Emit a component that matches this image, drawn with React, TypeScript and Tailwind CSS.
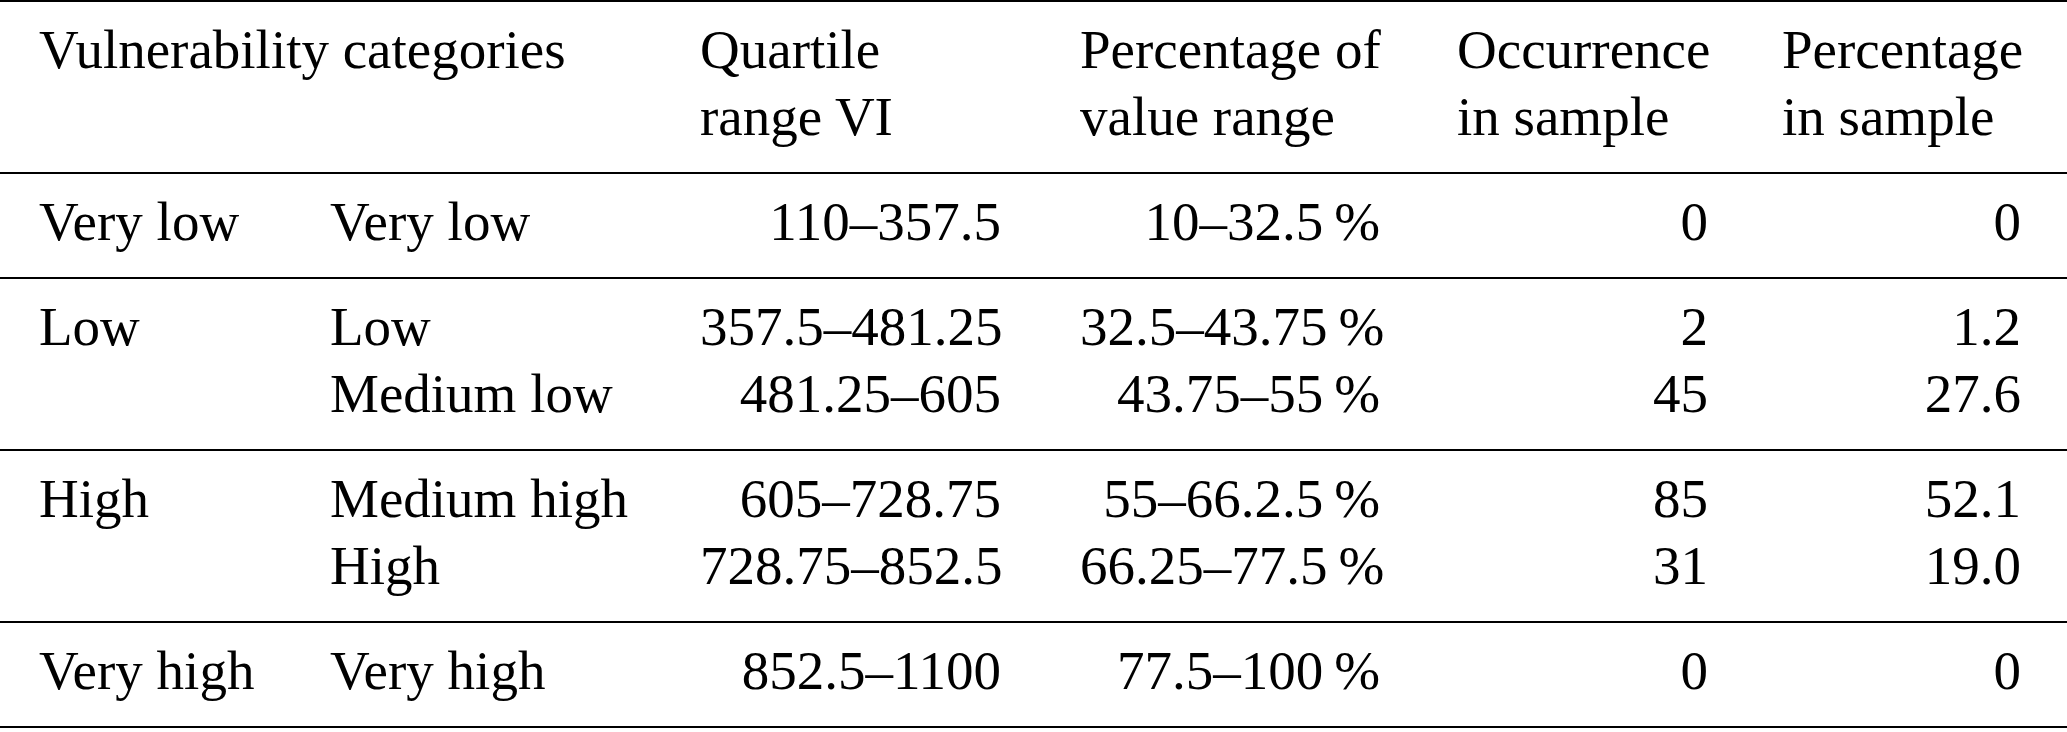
import React from "react";

type Row = [string, string, string, string, string, string];

const groups: Row[][] = [
  [["Very low", "Very low", "110–357.5", "10–32.5\u2009%", "0", "0"]],
  [
    ["Low", "Low", "357.5–481.25", "32.5–43.75\u2009%", "2", "1.2"],
    ["", "Medium low", "481.25–605", "43.75–55\u2009%", "45", "27.6"],
  ],
  [
    ["High", "Medium high", "605–728.75", "55–66.2.5\u2009%", "85", "52.1"],
    ["", "High", "728.75–852.5", "66.25–77.5\u2009%", "31", "19.0"],
  ],
  [["Very high", "Very high", "852.5–1100", "77.5–100\u2009%", "0", "0"]],
];

const gridCls = "grid grid-cols-[254px_371px_376px_379px_328px_313px]";

function DataRow({ r }: { r: Row }) {
  return (
    <>
      <div className="pl-[39px] whitespace-nowrap">{r[0] || "\u00a0"}</div>
      <div className="pl-[76px] whitespace-nowrap">{r[1]}</div>
      <div className="pl-[75px] text-right whitespace-nowrap">{r[2]}</div>
      <div className="pl-[79px] text-right whitespace-nowrap">{r[3]}</div>
      <div className="pl-[77px] text-right whitespace-nowrap">{r[4]}</div>
      <div className="pl-[74px] text-right whitespace-nowrap">{r[5]}</div>
    </>
  );
}

export default function App() {
  return (
    <div className="w-[2067px] h-[732px] bg-white text-black font-['Liberation_Serif','Times_New_Roman',serif] text-[55px] leading-[67px]">
      <div className="border-t-2 border-b-2 border-black pt-[14px] pb-[22px]">
        <div className={gridCls}>
          <div className="col-span-2 pl-[39px] whitespace-nowrap">Vulnerability categories</div>
          <div className="pl-[75px] whitespace-nowrap">
            Quartile
            <br />
            range VI
          </div>
          <div className="pl-[79px] whitespace-nowrap">
            Percentage of
            <br />
            value range
          </div>
          <div className="pl-[77px] whitespace-nowrap">
            Occurrence
            <br />
            in sample
          </div>
          <div className="pl-[74px] whitespace-nowrap">
            Percentage
            <br />
            in sample
          </div>
        </div>
      </div>
      {groups.map((g, i) => (
        <div key={i} className="border-b-2 border-black pt-[14px] pb-[22px]">
          <div className={gridCls}>
            {g.map((r, j) => (
              <DataRow key={j} r={r} />
            ))}
          </div>
        </div>
      ))}
    </div>
  );
}
